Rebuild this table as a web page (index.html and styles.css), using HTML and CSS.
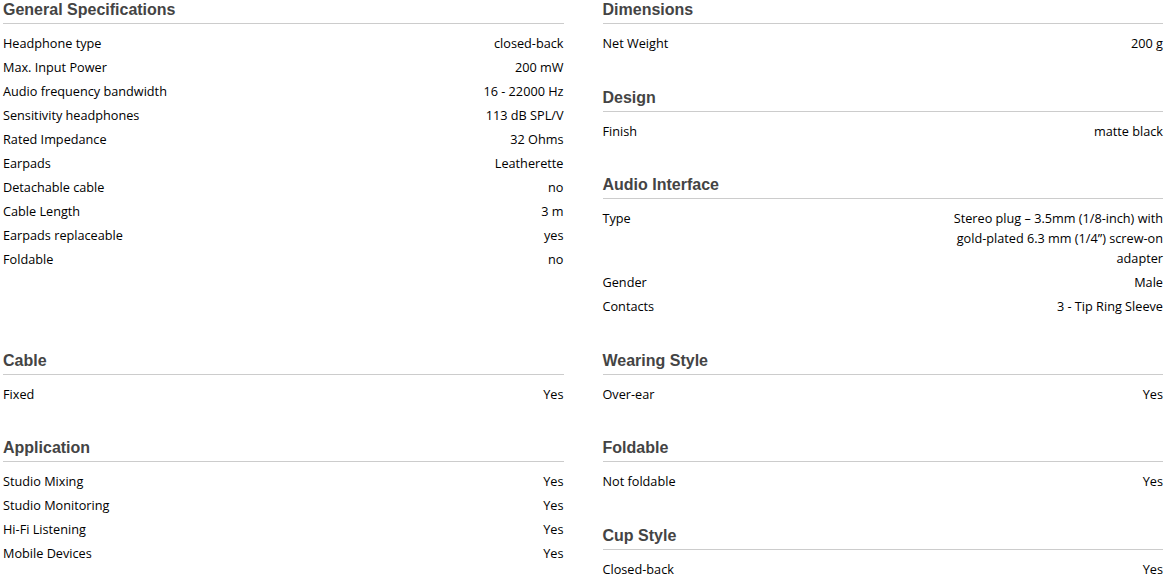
FILE: index.html
```html
<!DOCTYPE html>
<html>
<head>
<meta charset="utf-8">
<link rel="stylesheet" href="styles.css">
</head>
<body>
<div class="specs">
  <div class="col">
    <section class="group">
      <h2 class="group-title">General Specifications</h2>
      <div class="row"><span class="label">Headphone type</span><span class="value">closed-back</span></div>
      <div class="row"><span class="label">Max. Input Power</span><span class="value">200 mW</span></div>
      <div class="row"><span class="label">Audio frequency bandwidth</span><span class="value">16 - 22000 Hz</span></div>
      <div class="row"><span class="label">Sensitivity headphones</span><span class="value">113 dB SPL/V</span></div>
      <div class="row"><span class="label">Rated Impedance</span><span class="value">32 Ohms</span></div>
      <div class="row"><span class="label">Earpads</span><span class="value">Leatherette</span></div>
      <div class="row"><span class="label">Detachable cable</span><span class="value">no</span></div>
      <div class="row"><span class="label">Cable Length</span><span class="value">3 m</span></div>
      <div class="row"><span class="label">Earpads replaceable</span><span class="value">yes</span></div>
      <div class="row"><span class="label">Foldable</span><span class="value">no</span></div>
    </section>
  </div>
  <div class="col">
    <section class="group">
      <h2 class="group-title">Dimensions</h2>
      <div class="row"><span class="label">Net Weight</span><span class="value">200 g</span></div>
    </section>
    <section class="group">
      <h2 class="group-title">Design</h2>
      <div class="row"><span class="label">Finish</span><span class="value">matte black</span></div>
    </section>
    <section class="group">
      <h2 class="group-title">Audio Interface</h2>
      <div class="row"><span class="label">Type</span><span class="value">Stereo plug – 3.5mm (1/8-inch) with gold-plated 6.3 mm (1/4”) screw-on adapter</span></div>
      <div class="row"><span class="label">Gender</span><span class="value">Male</span></div>
      <div class="row"><span class="label">Contacts</span><span class="value">3 - Tip Ring Sleeve</span></div>
    </section>
  </div>
  <div class="col">
    <section class="group">
      <h2 class="group-title">Cable</h2>
      <div class="row"><span class="label">Fixed</span><span class="value">Yes</span></div>
    </section>
    <section class="group">
      <h2 class="group-title">Application</h2>
      <div class="row"><span class="label">Studio Mixing</span><span class="value">Yes</span></div>
      <div class="row"><span class="label">Studio Monitoring</span><span class="value">Yes</span></div>
      <div class="row"><span class="label">Hi-Fi Listening</span><span class="value">Yes</span></div>
      <div class="row"><span class="label">Mobile Devices</span><span class="value">Yes</span></div>
    </section>
  </div>
  <div class="col">
    <section class="group">
      <h2 class="group-title">Wearing Style</h2>
      <div class="row"><span class="label">Over-ear</span><span class="value">Yes</span></div>
    </section>
    <section class="group">
      <h2 class="group-title">Foldable</h2>
      <div class="row"><span class="label">Not foldable</span><span class="value">Yes</span></div>
    </section>
    <section class="group">
      <h2 class="group-title">Cup Style</h2>
      <div class="row"><span class="label">Closed-back</span><span class="value">Yes</span></div>
    </section>
  </div>
</div>
</body>
</html>
```
FILE: styles.css
```css
html, body {
  margin: 0;
  padding: 0;
  background: #fff;
}
body {
  font-family: "Open Sans", "Noto Sans", sans-serif;
  font-size: 12.7px;
  color: #000;
}
.specs {
  display: grid;
  grid-template-columns: 1fr 1fr;
  column-gap: 39px;
  padding: 0 2px 0 3px;
}
.group {
  margin-bottom: 32.5px;
}
.group-title {
  margin: 0 0 7px 0;
  font-family: "Liberation Sans", Arial, sans-serif;
  font-weight: bold;
  font-size: 16px;
  line-height: 20px;
  color: #444;
  padding-bottom: 3px;
  border-bottom: 1px solid #ccc;
}
.row {
  display: flex;
  justify-content: space-between;
  align-items: flex-start;
  padding: 2px 0;
  line-height: 20px;
}
.label {
  flex: 1;
}
.value {
  max-width: 40%;
  text-align: right;
}
```
